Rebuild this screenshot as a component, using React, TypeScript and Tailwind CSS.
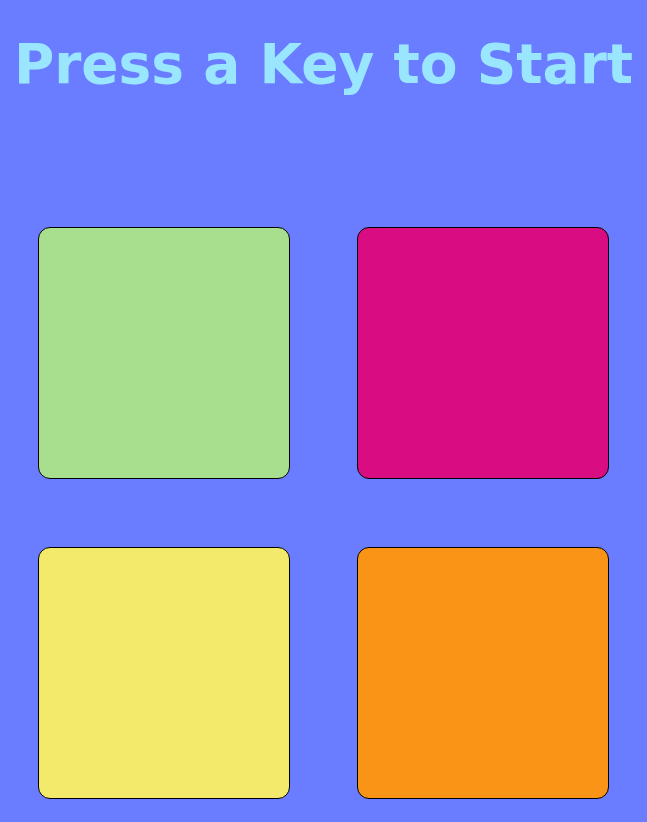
import React from 'react';

const pads = ['bg-[#a8df8e]', 'bg-[#da0c81]', 'bg-[#f3e96b]', 'bg-[#f99417]'];

export default function App() {
  return (
    <div className="min-h-screen bg-[#6a7cff] flex flex-col items-center">
      {/* Title */}
      <h1 className="mt-[29px] text-[55px] leading-[70px] font-bold text-[#9ae6ff] font-['DejaVu_Sans',sans-serif] whitespace-nowrap">
        Press a Key to Start
      </h1>

      {/* Pads */}
      <div className="mt-[128px] grid grid-cols-2 gap-x-[67px] gap-y-[68px]">
        {pads.map((c) => (
          <div key={c} className={`w-[252px] h-[252px] rounded-xl border border-black ${c}`} />
        ))}
      </div>
    </div>
  );
}
